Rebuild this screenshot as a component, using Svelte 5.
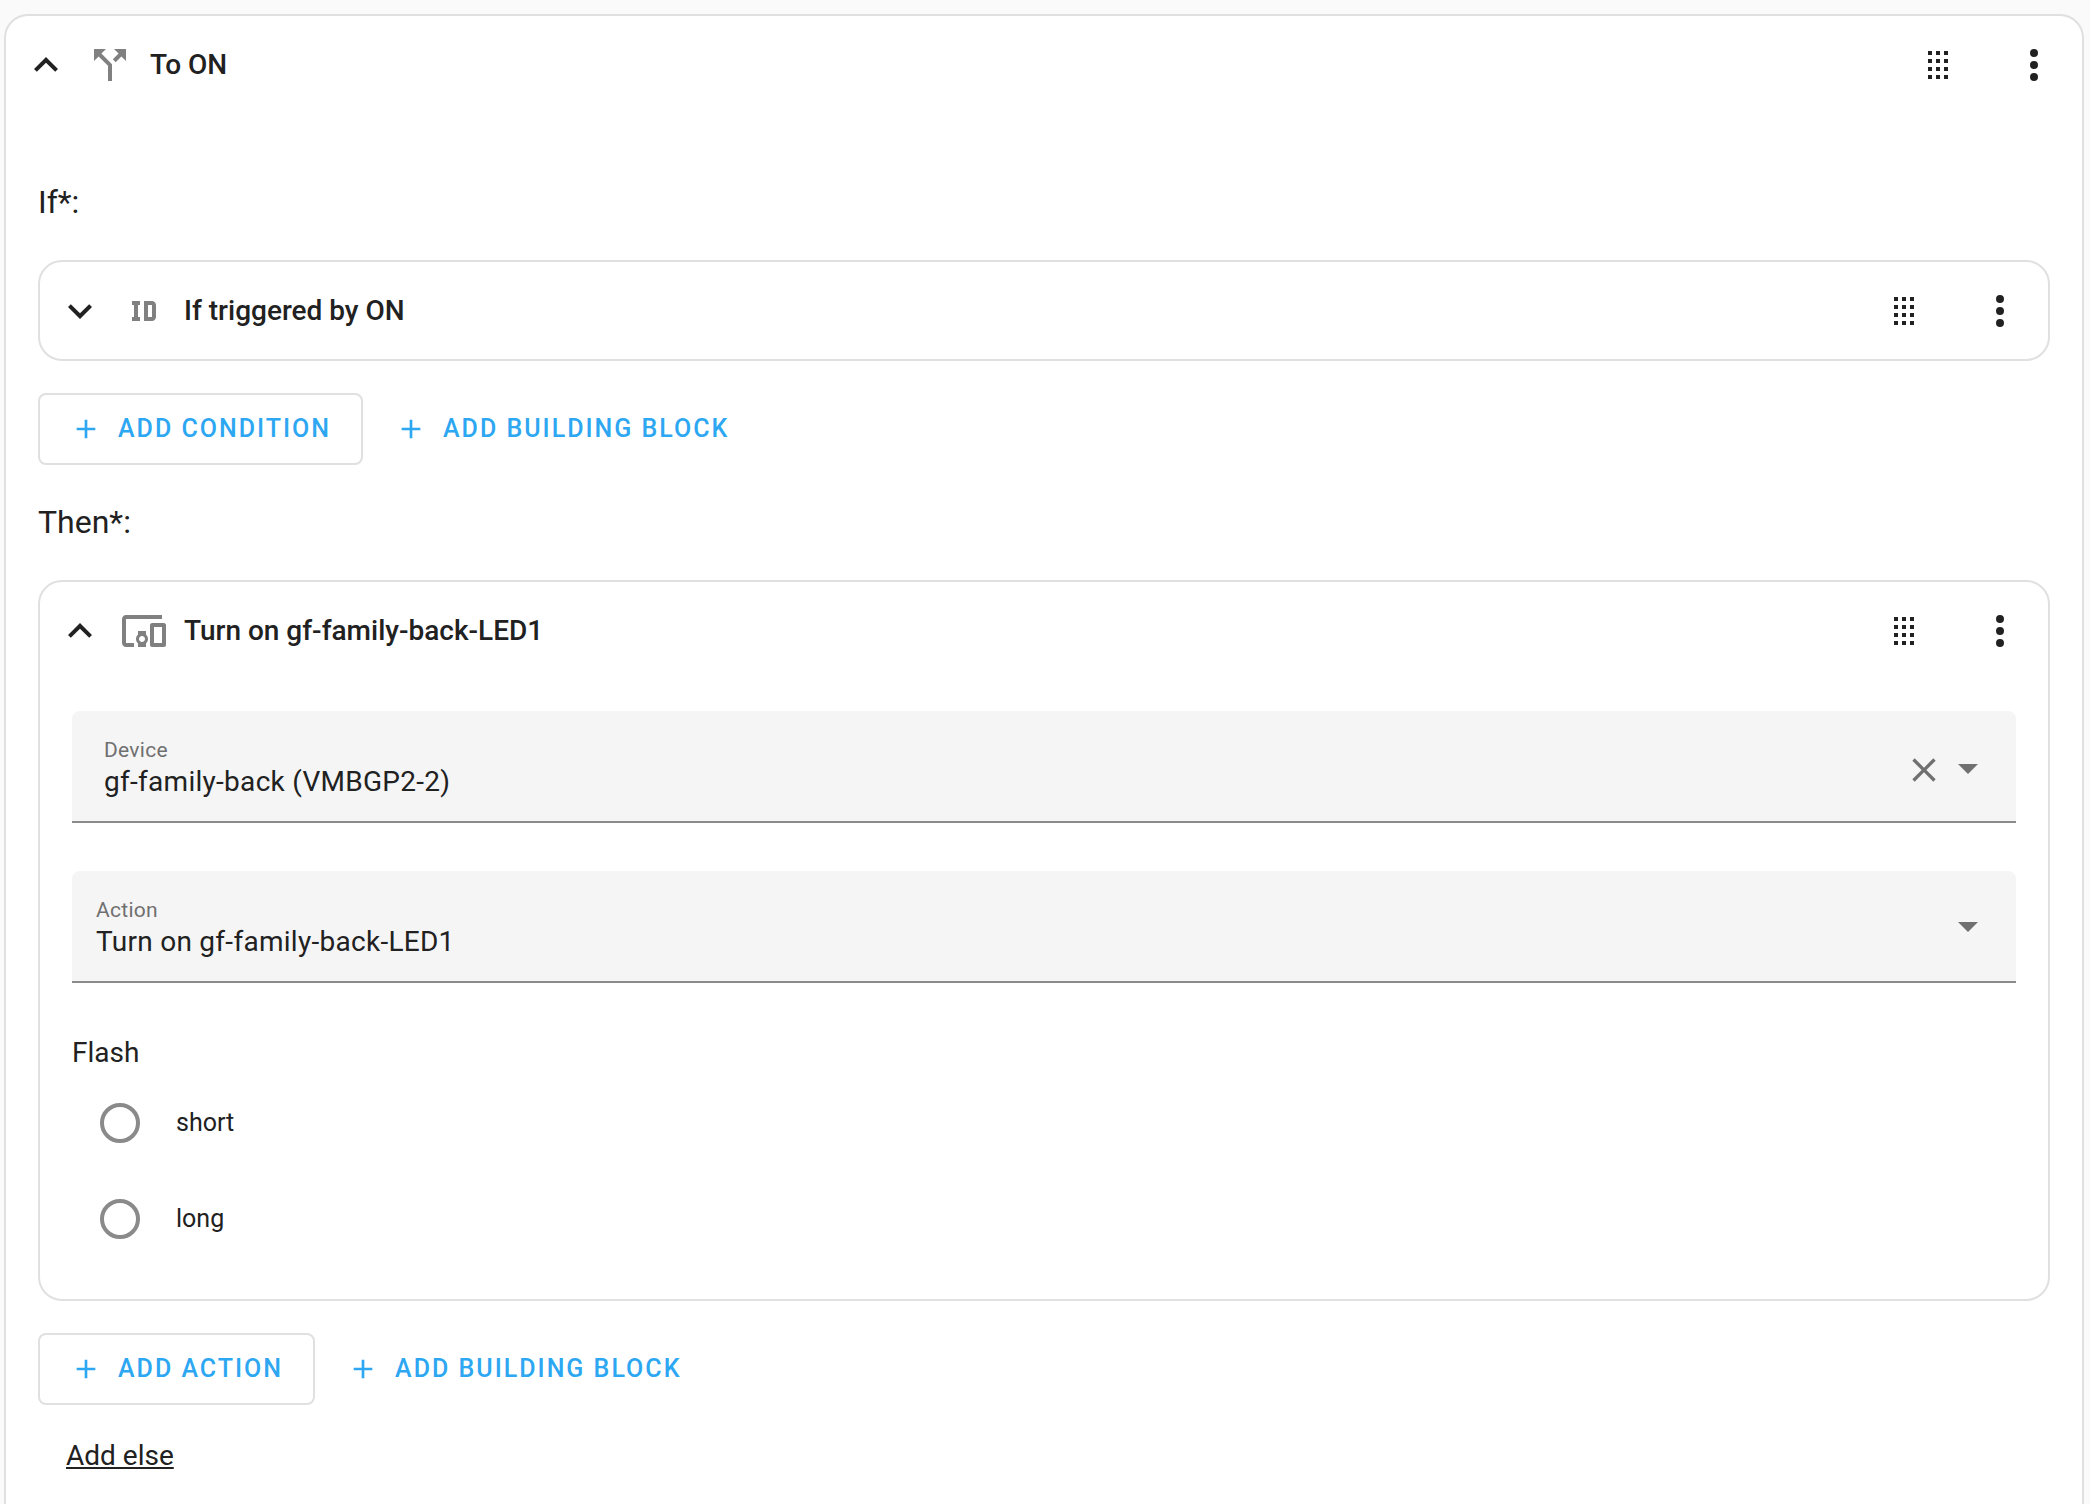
<script lang="ts">
// Material Design icon paths, all on a 24×24 grid.
const icons = {
  chevronUp: "M7.41,15.41L12,10.83L16.59,15.41L18,14L12,8L6,14L7.41,15.41Z",
  chevronDown: "M7.41,8.59L12,13.17L16.59,8.59L18,10L12,16L6,10L7.41,8.59Z",
  callSplit:
    "M14,4L16.29,6.29L13.41,9.17L14.83,10.59L17.71,7.71L20,10V4M10,4H4V10L6.29,7.71L11,12.41V20H13V11.59L7.71,6.29",
  identifier:
    "M10 7V9H9V15H10V17H6V15H7V9H6V7H10M16 7C17.11 7 18 7.9 18 9V15C18 16.11 17.11 17 16 17H12V7M16 9H14V15H16V9Z",
  devices:
    "M3 6H21V4H3C1.9 4 1 4.9 1 6V18C1 19.1 1.9 20 3 20H7V18H3V6M13 12H9V13.78C8.39 14.33 8 15.11 8 16C8 16.89 8.39 17.67 9 18.22V20H13V18.22C13.61 17.67 14 16.88 14 16S13.61 14.33 13 13.78V12M11 17.5C10.17 17.5 9.5 16.83 9.5 16S10.17 14.5 11 14.5 12.5 15.17 12.5 16 11.83 17.5 11 17.5M22 8H16C15.5 8 15 8.5 15 9V19C15 19.5 15.5 20 16 20H22C22.5 20 23 19.5 23 19V9C23 8.5 22.5 8 22 8M21 18H17V10H21V18Z",
  drag: "M7,19V17H9V19H7M11,19V17H13V19H11M15,19V17H17V19H15M7,15V13H9V15H7M11,15V13H13V15H11M15,15V13H17V15H15M7,11V9H9V11H7M11,11V9H13V11H11M15,11V9H17V11H15M7,7V5H9V7H7M11,7V5H13V7H11M15,7V5H17V7H15Z",
  dots: "M12,16A2,2 0 0,1 14,18A2,2 0 0,1 12,20A2,2 0 0,1 10,18A2,2 0 0,1 12,16M12,10A2,2 0 0,1 14,12A2,2 0 0,1 12,14A2,2 0 0,1 10,12A2,2 0 0,1 12,10M12,4A2,2 0 0,1 14,6A2,2 0 0,1 12,8A2,2 0 0,1 10,6A2,2 0 0,1 12,4Z",
  plus: "M19,13H13V19H11V13H5V11H11V5H13V11H19V13Z",
  close:
    "M19,6.41L17.59,5L12,10.59L6.41,5L5,6.41L10.59,12L5,17.59L6.41,19L12,13.41L17.59,19L19,17.59L13.41,12L19,6.41Z",
  menuDown: "M7,10L12,15L17,10H7Z",
};

const flashOptions = ["short", "long"];

let device = $state("gf-family-back (VMBGP2-2)");
let action = $state("Turn on gf-family-back-LED1");
let flash = $state("");
</script>

{#snippet icon(path: string, kind = "")}
  <svg class="icon {kind}" viewBox="0 0 24 24" aria-hidden="true"><path d={path} /></svg>
{/snippet}

{#snippet header(title: string, symbol: string, expanded: boolean)}
  <header>
    <button class="toggle" aria-expanded={expanded}>
      {@render icon(expanded ? icons.chevronUp : icons.chevronDown)}
      {@render icon(symbol, "muted")}
      <span class="title">{title}</span>
    </button>
    <button class="icon-button" aria-label="Move">{@render icon(icons.drag)}</button>
    <button class="icon-button" aria-label="Menu">{@render icon(icons.dots)}</button>
  </header>
{/snippet}

{#snippet addButtons(label: string)}
  <div class="buttons">
    <button class="add outlined">{@render icon(icons.plus, "small")}{label}</button>
    <button class="add">{@render icon(icons.plus, "small")}Add building block</button>
  </div>
{/snippet}

<main>
  <section class="option">
    {@render header("To ON", icons.callSplit, true)}

    <div class="option-body">
      <h2>If*:</h2>
      <article class="card">
        {@render header("If triggered by ON", icons.identifier, false)}
      </article>
      {@render addButtons("Add condition")}

      <h2>Then*:</h2>
      <article class="card">
        {@render header("Turn on gf-family-back-LED1", icons.devices, true)}
        <div class="card-body">
          <div class="field combo">
            <div class="field-text">
              <label for="device">Device</label>
              <input id="device" type="text" role="combobox" aria-expanded="false" aria-controls="device" bind:value={device} />
            </div>
            <button class="clear" aria-label="Clear" onclick={() => (device = "")}>
              {@render icon(icons.close, "medium")}
            </button>
            {@render icon(icons.menuDown, "grey")}
          </div>

          <div class="field">
            <div class="field-text">
              <label for="action">Action</label>
              <select id="action" bind:value={action}>
                <option>Turn on gf-family-back-LED1</option>
              </select>
            </div>
            {@render icon(icons.menuDown, "grey")}
          </div>

          <fieldset>
            <legend>Flash</legend>
            {#each flashOptions as option}
              <label class="radio">
                <input type="radio" name="flash" value={option} bind:group={flash} />
                {option}
              </label>
            {/each}
          </fieldset>
        </div>
      </article>
      {@render addButtons("Add action")}

      <a class="add-else" href="#else">Add else</a>
    </div>
  </section>
</main>

<style>
:global(body) {
  margin: 0;
  background: #fafafa;
}

main {
  --ink: #212121;
  --muted: #808080;
  --line: #e0e0e0;
  --accent: #2ea7f2;
  box-sizing: border-box;
  display: flex;
  min-height: 100vh;
  padding: 14px 6px 0 4px;
  color: var(--ink);
  font-family: Roboto, sans-serif;
  font-size: 28px;
  line-height: 32px;
}

button,
input,
select {
  margin: 0;
  padding: 0;
  border: none;
  background: none;
  color: inherit;
  font: inherit;
  letter-spacing: inherit;
}
button {
  cursor: pointer;
}

.option {
  flex: 1;
  min-width: 0;
  border: 2px solid var(--line);
  border-bottom: none;
  border-radius: 24px 24px 0 0;
  background: #fff;
}
.option-body {
  padding: 32px 32px 0;
}

.card {
  border: 2px solid var(--line);
  border-radius: 24px;
}
.card-body {
  padding: 32px;
}

h2 {
  margin: 37px 0 38px;
  font-size: 32px;
  font-weight: 400;
  line-height: 40px;
}

header {
  display: flex;
  align-items: center;
  height: 96px;
  padding-top: 1px;
}
.toggle {
  display: flex;
  flex: 1;
  align-items: center;
  gap: 16px;
  padding-left: 16px;
  text-align: left;
}
.title {
  font-weight: 500;
}
.icon-button {
  padding: 24px;
}

.icon {
  display: block;
  flex: none;
  width: 48px;
  height: 48px;
  fill: currentColor;
}
.icon.muted {
  fill: var(--muted);
}
.icon.grey {
  fill: #707070;
}
.icon.medium {
  width: 40px;
  height: 40px;
  fill: #707070;
}
.icon.small {
  width: 32px;
  height: 32px;
}

.buttons {
  display: flex;
  gap: 16px;
  margin-top: 32px;
}
.add {
  display: flex;
  align-items: center;
  gap: 16px;
  height: 72px;
  padding: 0 16px;
  border-radius: 8px;
  color: var(--accent);
  font-size: 25px;
  font-weight: 500;
  letter-spacing: 2px;
  text-transform: uppercase;
  box-sizing: border-box;
}
.add.outlined {
  padding: 0 30px;
  border: 2px solid var(--line);
}

.field {
  display: flex;
  align-items: center;
  box-sizing: border-box;
  height: 112px;
  padding: 0 24px;
  border-bottom: 2px solid #8a8a8a;
  border-radius: 8px 8px 0 0;
  background: #f5f5f5;
  letter-spacing: 0.01em;
}
.field + .field {
  margin-top: 48px;
}
.field.combo {
  padding-left: 32px;
}
.combo .icon,
.clear {
  margin-top: 4px;
}
.field-text {
  display: flex;
  flex: 1;
  flex-direction: column;
  min-width: 0;
  padding-top: 3px;
}
.field-text label {
  color: #707070;
  font-size: 21px;
  line-height: 28px;
}
.field-text input,
.field-text select {
  width: 100%;
  height: 36px;
  appearance: none;
  outline: none;
}

fieldset {
  margin: 54px 0 0;
  padding: 0;
  border: none;
}
legend {
  padding: 0 0 6px;
}
.radio {
  display: flex;
  align-items: center;
  gap: 36px;
  height: 96px;
  padding-left: 28px;
  font-size: 25px;
}
.radio input {
  width: 40px;
  height: 40px;
  border: 4px solid #8a8a8a;
  border-radius: 50%;
  appearance: none;
}
.radio input:checked {
  background: radial-gradient(var(--accent) 50%, transparent 54%);
}

.add-else {
  display: inline-block;
  margin: 35px 28px 28px;
  color: inherit;
}
</style>
